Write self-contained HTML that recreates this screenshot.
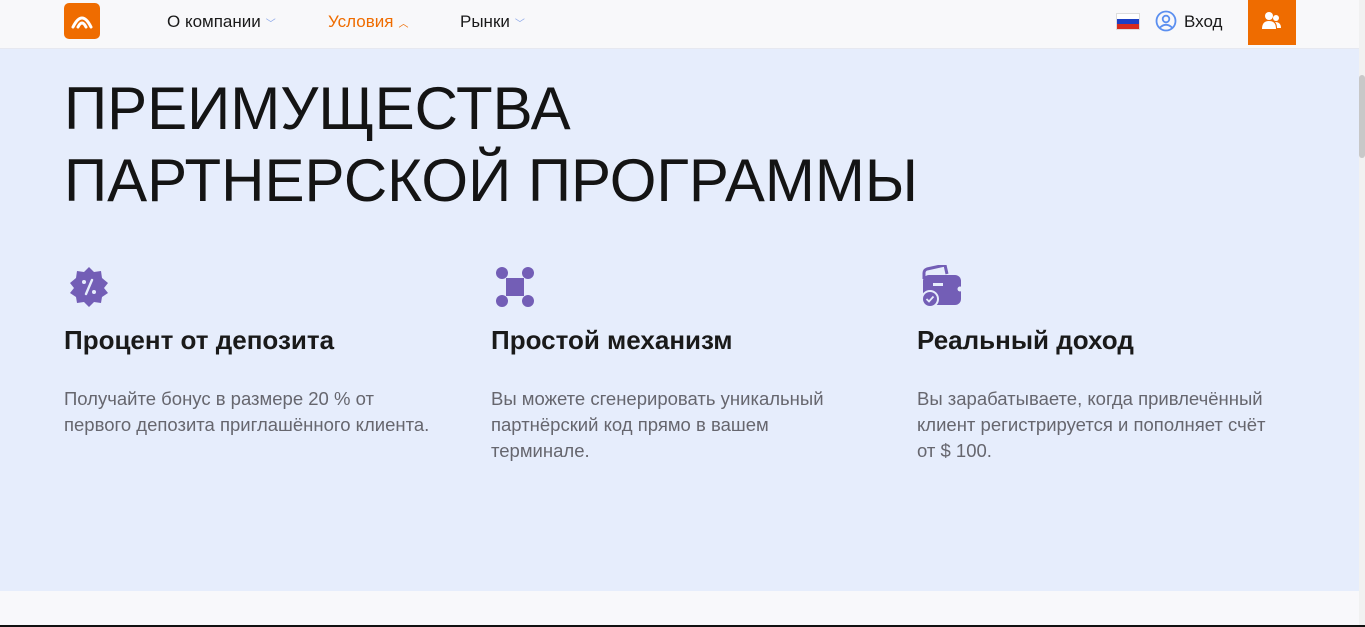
<!DOCTYPE html>
<html><head><meta charset="utf-8"><style>
*{margin:0;padding:0;box-sizing:border-box}
body{width:1365px;height:627px;overflow:hidden;background:#f8f8fb;font-family:"Liberation Sans",sans-serif;position:relative}
.hdr{position:absolute;left:0;top:0;width:1359px;height:49px;background:#f8f8fa;border-bottom:1px solid #e6e8f0}
.logo{position:absolute;left:64px;top:3px;width:36px;height:36px;background:#ef6c00;border-radius:5px}
.nav{position:absolute;top:12px;font-size:17px;color:#1a1a1a}
.nav .c{font-size:10px;color:#8aa6e8;margin-left:5px}
.sec{position:absolute;left:0;top:49px;width:1359px;height:542px;background:#e6edfc}
h1{position:absolute;left:64px;top:73px;font-weight:400;font-size:60px;line-height:72px;color:#141414}
.card{position:absolute;top:265px;width:390px}
.card h3{position:absolute;top:60px;font-size:26px;font-weight:700;color:#1a1a1a;white-space:nowrap}
.card p{position:absolute;top:121px;font-size:18.5px;line-height:26px;color:#66666e;width:365px}
.sb{position:absolute;left:1359px;top:0;width:6px;height:627px;background:#f1f1f1}
.th{position:absolute;left:1359px;top:75px;width:6px;height:83px;background:#c8c8c8;border-radius:3px}
.bot{position:absolute;left:0;top:625px;width:1365px;height:2px;background:#111}
</style></head><body>
<div class="hdr">
 <div class="logo"><svg width="36" height="36" viewBox="0 0 36 36"><path d="M9 24 Q18 6 27 24" stroke="#fff" stroke-width="3" fill="none" stroke-linecap="round"/><path d="M14 24 Q18 16 22 24" stroke="#fff" stroke-width="3" fill="none" stroke-linecap="round"/></svg></div>
 <div class="nav" style="left:167px">О компании<span class="c">﹀</span></div>
 <div class="nav" style="left:328px;color:#ef6c00">Условия<span class="c" style="color:#ef6c00">︿</span></div>
 <div class="nav" style="left:460px">Рынки<span class="c">﹀</span></div>
 <div style="position:absolute;left:1116px;top:13px;width:24px;height:17px;border:1px solid #ddd"><div style="height:5px;background:#fff"></div><div style="height:5px;background:#1c3fc4"></div><div style="height:5px;background:#d52b1e"></div></div>
 <svg style="position:absolute;left:1155px;top:10px" width="22" height="22" viewBox="0 0 22 22"><circle cx="11" cy="11" r="9.5" stroke="#5b8ff0" stroke-width="1.8" fill="none"/><circle cx="11" cy="9" r="3.3" stroke="#5b8ff0" stroke-width="1.8" fill="none"/><path d="M5 17.5 Q11 12 17 17.5" stroke="#5b8ff0" stroke-width="1.8" fill="none"/></svg>
 <div class="nav" style="left:1184px">Вход</div>
 <div style="position:absolute;left:1248px;top:0;width:48px;height:45px;background:#ef6c00"><svg style="position:absolute;left:13px;top:11px" width="22" height="20" viewBox="0 0 22 20"><circle cx="8" cy="5" r="4" fill="#fff"/><path d="M1 18 Q1 10 8 10 Q15 10 15 18Z" fill="#fff"/><circle cx="15" cy="7" r="3" fill="#fff"/><path d="M14 11 Q20 11 20 17 L16 17 Q16 13 14 11Z" fill="#fff"/></svg></div>
</div>
<div class="sec">
</div>
<h1>ПРЕИМУЩЕСТВА<br>ПАРТНЕРСКОЙ ПРОГРАММЫ</h1>
<div class="card" style="left:64px">
 <svg width="44" height="44" viewBox="0 0 44 44" style="position:absolute;left:3px;top:0"><path d="M22 2 L27 7 L34 6 L35 13 L41 18 L37 23 L41 28 L35 32 L34 38 L27 37 L22 42 L17 37 L10 38 L9 32 L3 28 L7 23 L3 18 L9 13 L10 6 L17 7Z" fill="#735eb6"/><path d="M25 15 L19 29" stroke="#e6edfc" stroke-width="2.4" stroke-linecap="round"/><circle cx="17" cy="17" r="2" fill="#e6edfc"/><circle cx="27" cy="27" r="2" fill="#e6edfc"/></svg>
 <h3>Процент от депозита</h3>
 <p style="width:379px">Получайте бонус в размере 20 % от первого депозита приглашённого клиента.</p>
</div>
<div class="card" style="left:491px">
 <svg width="44" height="44" viewBox="0 0 44 44" style="position:absolute;left:2px;top:0"><circle cx="9" cy="8" r="6" fill="#735eb6"/><circle cx="35" cy="8" r="6" fill="#735eb6"/><circle cx="9" cy="36" r="6" fill="#735eb6"/><circle cx="35" cy="36" r="6" fill="#735eb6"/><rect x="13" y="13" width="18" height="18" fill="#735eb6"/></svg>
 <h3>Простой механизм</h3>
 <p>Вы можете сгенерировать уникальный партнёрский код прямо в вашем терминале.</p>
</div>
<div class="card" style="left:917px">
 <svg width="46" height="46" viewBox="0 0 46 46" style="position:absolute;left:2px;top:0"><path d="M5 14 L5 8 Q5 5 8 4 L26 0 L28 9" stroke="#735eb6" stroke-width="3" fill="none"/><rect x="4" y="10" width="38" height="30" rx="6" fill="#735eb6"/><rect x="14" y="18" width="10" height="3" fill="#e6edfc"/><circle cx="41" cy="24" r="2.5" fill="#e6edfc"/><circle cx="11" cy="34" r="9" fill="#e6edfc"/><circle cx="11" cy="34" r="7" fill="#735eb6"/><path d="M7.5 34 L10 36.5 L14.5 31.5" stroke="#e6edfc" stroke-width="1.8" fill="none"/></svg>
 <h3>Реальный доход</h3>
 <p>Вы зарабатываете, когда привлечённый клиент регистрируется и пополняет счёт от $ 100.</p>
</div>
<div class="sb"></div><div class="th"></div>
<div class="bot"></div>
</body></html>
